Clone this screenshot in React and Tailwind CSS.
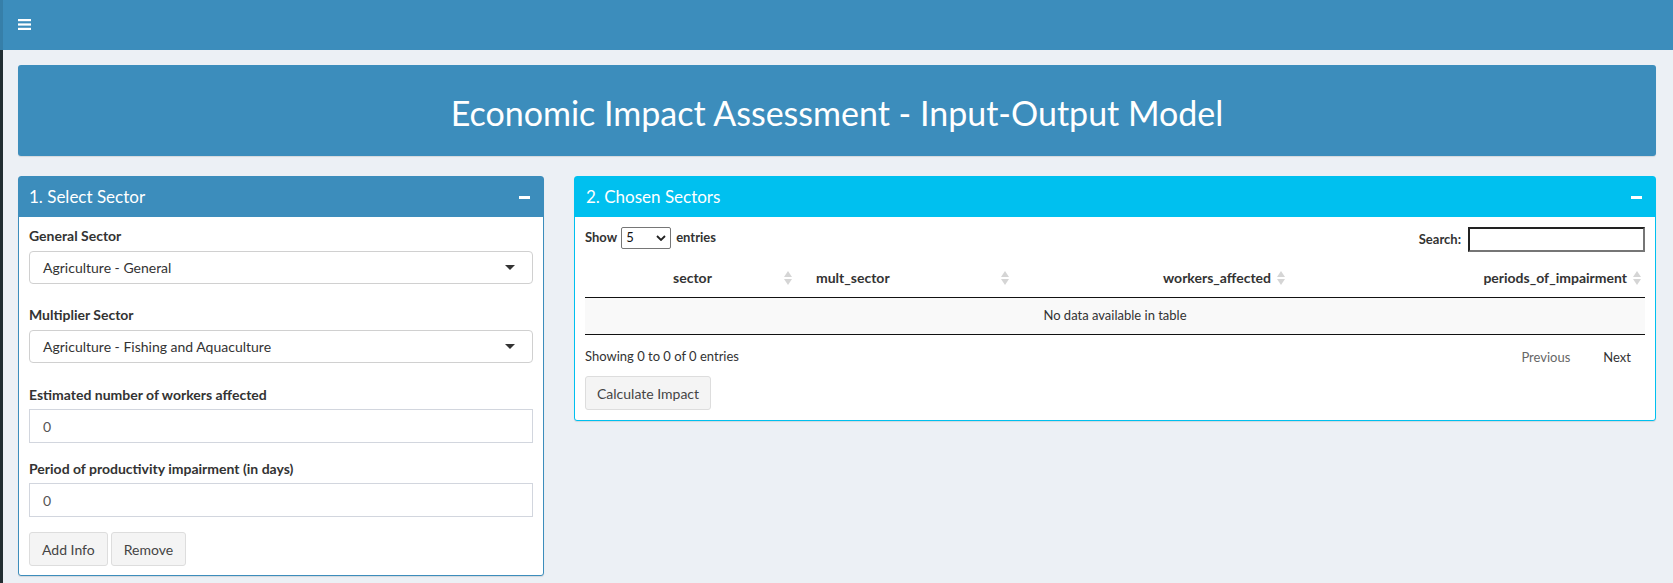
import React from "react";

function SortIcon() {
  return (
    <svg width="8" height="14" viewBox="0 0 8 14" className="block">
      <path d="M4 0 L8 6 L0 6 Z" fill="#d5d5d5" />
      <path d="M4 14 L8 8 L0 8 Z" fill="#d5d5d5" />
    </svg>
  );
}

function Minus() {
  return <div className="w-[11px] h-[3px] bg-white" />;
}

function Caret() {
  return (
    <svg width="10" height="5" viewBox="0 0 10 5">
      <path d="M0 0 L10 0 L5 5 Z" fill="#333" />
    </svg>
  );
}

function Label({ children, className = "" }) {
  return (
    <div className={"h-5 leading-5 text-[14px] font-bold text-[#333] " + className}>
      {children}
    </div>
  );
}

function FakeSelect({ value, className = "" }) {
  return (
    <div
      className={
        "h-[33px] border border-[#d0d0d0] rounded-[4px] bg-white flex items-center justify-between pl-[13px] pr-[17px] text-[14px] text-[#333] " +
        className
      }
    >
      <span>{value}</span>
      <Caret />
    </div>
  );
}

function TextInput({ value, className = "" }) {
  return (
    <div
      className={
        "h-[34px] border border-[#d2d6de] bg-white flex items-center px-[13px] text-[14px] text-[#555] " +
        className
      }
    >
      {value}
    </div>
  );
}

function Btn({ children, className = "" }) {
  return (
    <button
      className={
        "h-[34px] px-3 bg-[#f4f4f4] border border-[#ddd] rounded-[3px] text-[14px] text-[#444] " +
        className
      }
    >
      {children}
    </button>
  );
}

export default function App() {
  return (
    <div className="min-h-screen flex flex-col bg-[#ecf0f5] font-['Lato','Liberation_Sans',sans-serif]">
      {/* top bar */}
      <div className="h-[50px] flex bg-[#3c8dbc]">
        <div className="w-[3px] bg-[#367fa9]" />
        <div className="pl-[15px] pt-[19px]">
          <svg width="13" height="11" viewBox="0 0 13 11" className="block">
            <rect x="0" y="0" width="13" height="2.2" fill="#fff" />
            <rect x="0" y="4.4" width="13" height="2.2" fill="#fff" />
            <rect x="0" y="8.8" width="13" height="2.2" fill="#fff" />
          </svg>
        </div>
      </div>

      <div className="flex flex-1">
        <div className="w-[3px] bg-[#222d32]" />
        <div className="flex-1 pl-[15px] pr-[17px] pt-[15px]">
          {/* title */}
          <div className="h-[91px] bg-[#3c8dbc] rounded-[3px] shadow-[0_1px_1px_rgba(0,0,0,0.1)] flex items-center justify-center">
            <h1 className="text-white text-[34px] font-normal pt-[4px]">
              Economic Impact Assessment - Input-Output Model
            </h1>
          </div>

          <div className="flex items-start gap-[30px] mt-[20px]">
            {/* left box */}
            <div className="w-[526px] border border-[#3c8dbc] rounded-[3px] bg-white shadow-[0_1px_1px_rgba(0,0,0,0.1)]">
              <div className="h-[40px] bg-[#3c8dbc] flex items-center justify-between pl-[10px] pr-[13px]">
                <span className="text-white text-[17px]">1. Select Sector</span>
                <Minus />
              </div>
              <div className="px-[10px] pt-[9px] pb-[9px]">
                <Label>General Sector</Label>
                <FakeSelect value="Agriculture - General" className="mt-[5px]" />
                <Label className="mt-[21px]">Multiplier Sector</Label>
                <FakeSelect value="Agriculture - Fishing and Aquaculture" className="mt-[5px]" />
                <Label className="mt-[22px]">Estimated number of workers affected</Label>
                <TextInput value="0" className="mt-[4px]" />
                <Label className="mt-[16px]">Period of productivity impairment (in days)</Label>
                <TextInput value="0" className="mt-[4px]" />
                <div className="flex gap-[3px] mt-[15px]">
                  <Btn>Add Info</Btn>
                  <Btn>Remove</Btn>
                </div>
              </div>
            </div>

            {/* right box */}
            <div className="flex-1 border border-[#00c0ef] rounded-[3px] bg-white shadow-[0_1px_1px_rgba(0,0,0,0.1)]">
              <div className="h-[40px] bg-[#00c0ef] flex items-center justify-between pl-[11px] pr-[13px]">
                <span className="text-white text-[17px]">2. Chosen Sectors</span>
                <Minus />
              </div>
              <div className="px-[10px] pt-[10px] pb-[10px] text-[13px] text-[#333]">
                <div className="flex items-start justify-between">
                  <div className="flex items-center h-[22px] font-bold">
                    <span>Show</span>
                    <div className="ml-[4px] mr-[5px] w-[50px] h-[22px] border border-[#767676] rounded-[2px] flex items-center justify-between px-[4px] font-normal text-[#111]">
                      <span>5</span>
                      <svg width="10" height="6" viewBox="0 0 10 6">
                        <path d="M1 1 L5 5 L9 1" stroke="#222" strokeWidth="1.8" fill="none" />
                      </svg>
                    </div>
                    <span>entries</span>
                  </div>
                  <div className="flex items-center h-[25px]">
                    <span className="font-bold mr-[7px]">Search:</span>
                    <div className="w-[177px] h-[25px] border-2 border-[#222] border-r-[#767676] border-b-[#767676] bg-white" />
                  </div>
                </div>

                {/* table */}
                <div className="mt-[6px] text-[14px]">
                  <div className="flex h-[40px] items-center border-b border-[#111] font-bold">
                    <div className="relative w-[215px] h-full flex items-center justify-center pl-[14px] pr-[14px]">
                      <span>sector</span>
                      <div className="absolute right-[8px] top-[13px]"><SortIcon /></div>
                    </div>
                    <div className="relative w-[210px] h-full flex items-center pl-[16px]">
                      <span>mult_sector</span>
                      <div className="absolute right-[1px] top-[13px]"><SortIcon /></div>
                    </div>
                    <div className="relative w-[280px] h-full flex items-center justify-end pr-[19px]">
                      <span>workers_affected</span>
                      <div className="absolute right-[5px] top-[13px]"><SortIcon /></div>
                    </div>
                    <div className="relative flex-1 h-full flex items-center justify-end pr-[18px]">
                      <span>periods_of_impairment</span>
                      <div className="absolute right-[4px] top-[13px]"><SortIcon /></div>
                    </div>
                  </div>
                  <div className="h-[37px] bg-[#f9f9f9] border-b border-[#111] flex items-center justify-center text-[13px]">
                    No data available in table
                  </div>
                </div>

                <div className="flex items-center justify-between mt-[12px] h-5">
                  <span>Showing 0 to 0 of 0 entries</span>
                  <div className="flex items-center pt-[2px] text-[13px]">
                    <span className="text-[#666] mr-[33px]">Previous</span>
                    <span className="text-[#333] mr-[14px]">Next</span>
                  </div>
                </div>

                <Btn className="mt-[9px] h-[33px] px-[11px]">Calculate Impact</Btn>
              </div>
            </div>
          </div>
        </div>
      </div>
    </div>
  );
}
